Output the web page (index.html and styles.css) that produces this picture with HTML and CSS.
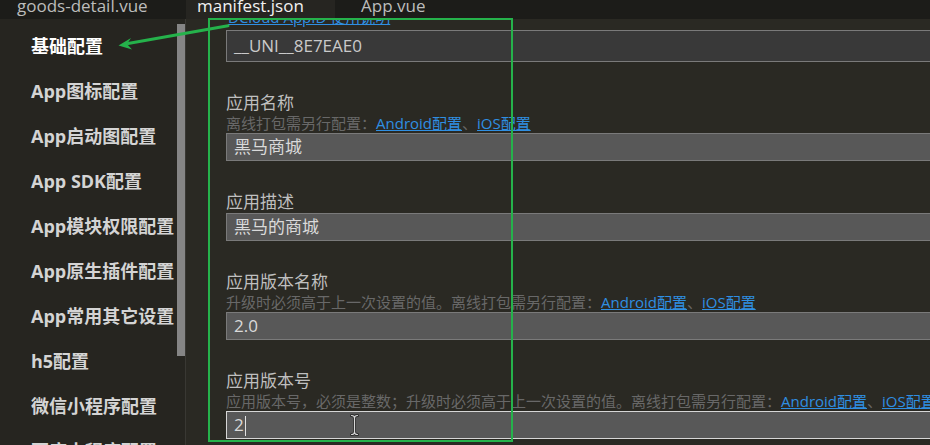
FILE: index.html
```html
<!DOCTYPE html>
<html lang="zh-CN">
<head>
<meta charset="utf-8">
<title>manifest.json</title>
<link rel="stylesheet" href="styles.css">
</head>
<body>
<div class="app">
  <div class="tabbar">
    <div class="tab tab-1"><span>goods-detail.vue</span></div>
    <div class="tab tab-2 active"><span>manifest.json</span></div>
    <div class="tab tab-3"><span>App.vue</span></div>
  </div>
  <div class="main">
    <aside class="sidebar">
      <ul class="nav">
        <li class="active">基础配置</li>
        <li>App图标配置</li>
        <li>App启动图配置</li>
        <li>App SDK配置</li>
        <li>App模块权限配置</li>
        <li>App原生插件配置</li>
        <li>App常用其它设置</li>
        <li>h5配置</li>
        <li>微信小程序配置</li>
        <li>百度小程序配置</li>
      </ul>
      <div class="scrolltrack"><div class="thumb"></div></div>
    </aside>
    <section class="content">
      <div class="form">
        <div class="field field-first">
          <div class="label">uni-app应用标识（AppID）</div>
          <div class="hint"><a class="link">DCloud AppID 使用说明</a></div>
          <div class="input readonly">__UNI__8E7EAE0</div>
        </div>
        <div class="field">
          <div class="label">应用名称</div>
          <div class="hint">离线打包需另行配置：<a class="link">Android配置</a>、<a class="link">iOS配置</a></div>
          <div class="input">黑马商城</div>
        </div>
        <div class="field">
          <div class="label">应用描述</div>
          <div class="input">黑马的商城</div>
        </div>
        <div class="field">
          <div class="label">应用版本名称</div>
          <div class="hint">升级时必须高于上一次设置的值。离线打包需另行配置：<a class="link">Android配置</a>、<a class="link">iOS配置</a></div>
          <div class="input">2.0</div>
        </div>
        <div class="field">
          <div class="label">应用版本号</div>
          <div class="hint">应用版本号，必须是整数；升级时必须高于上一次设置的值。离线打包需另行配置：<a class="link">Android配置</a>、<a class="link">iOS配置</a></div>
          <div class="input focused">2<span class="caret"></span></div>
        </div>
      </div>
    </section>
  </div>

  <div class="annot-rect"></div>
  <svg class="overlay" width="930" height="445" viewBox="0 0 930 445">
    <line x1="128" y1="43.6" x2="228" y2="25.8" stroke="#25b24b" stroke-width="3" stroke-linecap="round"/>
    <polygon points="118.5,45.5 131,38 127,44 132,49.5" fill="#25b24b"/>
    <g fill="none" stroke-linecap="round">
      <path d="M351.5 415.5 Q354.5 415.5 354.5 418 L354.5 432 Q354.5 434.5 351.5 434.5 M357.5 415.5 Q354.5 415.5 354.5 418 M357.5 434.5 Q354.5 434.5 354.5 432" stroke="#2a2a2a" stroke-width="3"/>
      <path d="M351.5 415.5 Q354.5 415.5 354.5 418 L354.5 432 Q354.5 434.5 351.5 434.5 M357.5 415.5 Q354.5 415.5 354.5 418 M357.5 434.5 Q354.5 434.5 354.5 432" stroke="#d8d8d8" stroke-width="1.2"/>
    </g>
  </svg>
</div>
</body>
</html>
```

FILE: styles.css
```css
html, body {
  margin: 0;
  padding: 0;
  background: #2a2923;
  overflow: hidden;
}

body {
  font-family: "Open Sans", "Noto Sans CJK SC", sans-serif;
}

.app {
  position: relative;
  width: 930px;
  height: 445px;
  display: flex;
  flex-direction: column;
  overflow: hidden;
}

/* ---------- tab bar ---------- */
.tabbar {
  flex: none;
  height: 19px;
  display: flex;
  background: #1c1c19;
  overflow: hidden;
  position: relative;
  z-index: 1;
}

.tab {
  height: 19px;
  overflow: hidden;
  font-size: 17px;
  color: #bcbcbc;
  box-sizing: border-box;
}

.tab span {
  display: block;
  line-height: 19px;
  margin-top: -4px;
  white-space: nowrap;
}

.tab-1 {
  width: 186px;
  padding-left: 17px;
}

.tab-2 {
  width: 149px;
  padding-left: 11px;
}

.tab-3 {
  padding-left: 26px;
}

.tab.active {
  background: #262521;
  color: #f2f2f2;
}

/* ---------- main ---------- */
.main {
  flex: 1;
  display: flex;
  min-height: 0;
}

.sidebar {
  flex: none;
  width: 185px;
  display: flex;
  background: #262520;
  border-right: 1px solid #393833;
}

.nav {
  list-style: none;
  margin: 0;
  padding: 5px 0 0 31px;
  width: 177px;
  box-sizing: border-box;
  flex: none;
}

.nav li {
  height: 45px;
  line-height: 45px;
  font-size: 18px;
  font-weight: 700;
  color: #d4d4d4;
  white-space: nowrap;
}

.nav li.active {
  color: #ffffff;
}

.scrolltrack {
  width: 8px;
  flex: none;
}

.thumb {
  margin-top: 5px;
  height: 332px;
  background: #858585;
}

/* ---------- content ---------- */
.content {
  flex: 1;
  min-width: 0;
  overflow: hidden;
  padding-left: 40px;
  background: #2a2923;
}

.form {
  margin-top: -30px;
}

.field {
  width: 720px;
  margin-bottom: 30px;
}

.label {
  height: 22px;
  line-height: 22px;
  font-size: 17px;
  color: #bfbfbf;
  white-space: nowrap;
}

.hint {
  height: 19px;
  line-height: 19px;
  font-size: 15px;
  color: #686868;
  white-space: nowrap;
}

.field-first .hint {
  margin-top: -3px;
  margin-bottom: 3px;
  padding-left: 2px;
}

.link {
  color: #2f8fe2;
  text-decoration: underline;
  cursor: pointer;
}

.input {
  box-sizing: border-box;
  height: 28px;
  line-height: 26px;
  padding-left: 7px;
  font-size: 17px;
  color: #dadada;
  background: #585858;
  border: 1px solid #7a7a7a;
  white-space: nowrap;
}

.input.readonly {
  height: 32px;
  line-height: 30px;
  background: #393939;
  color: #cacaca;
}

.input.focused {
  border-color: #d6d6d6;
}

.caret {
  display: inline-block;
  width: 1px;
  height: 20px;
  margin-left: 1px;
  vertical-align: middle;
  background: #e2e2e2;
}

/* ---------- annotation overlay ---------- */
.annot-rect {
  position: absolute;
  left: 208px;
  top: 18px;
  width: 301px;
  height: 420px;
  border: 2px solid #25b24b;
  pointer-events: none;
  z-index: 2;
}

.overlay {
  position: absolute;
  left: 0;
  top: 0;
  pointer-events: none;
  z-index: 2;
}
```
